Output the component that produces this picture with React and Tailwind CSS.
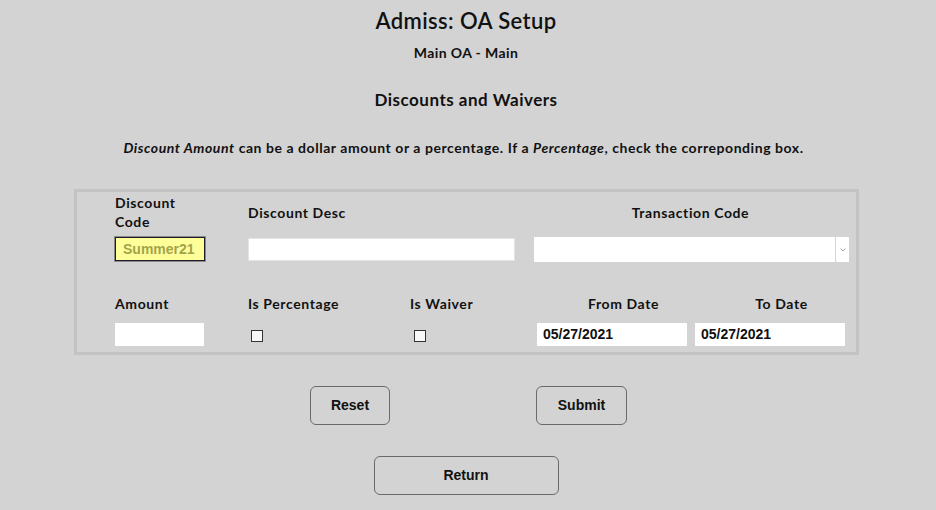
import React from "react";

const head = { fontFamily: "Lato, 'Open Sans', sans-serif" };
const arial = { fontFamily: "'Liberation Sans', Arial, sans-serif" };

function Check() {
  return <div className="w-[12px] h-[12px] border border-[#333] bg-[#f8f8f8]" />;
}

export default function App() {
  return (
    <div className="min-h-[510px] w-[936px] bg-[#d3d3d3] text-[#111]" style={head}>
      <div className="pr-[4px]">
        <div className="pt-[7px] text-center text-[22px] leading-[28px] font-semibold tracking-[0.4px]">Admiss: OA Setup</div>
        <div className="mt-[8px] text-center text-[14px] leading-[20px] font-bold tracking-[0.4px]">Main OA - Main</div>
        <div className="mt-[27px] text-center text-[17px] leading-[20px] font-bold tracking-[0.5px]">Discounts and Waivers</div>
      </div>
      <div className="mt-[28px] pr-[9px] text-center text-[14px] leading-[20px] font-bold tracking-[0.55px]">
        <i>Discount Amount</i> can be a dollar amount or a percentage. If a <i>Percentage</i>, check the correponding box.
      </div>

      <div className="mt-[31px] ml-[74px] w-[785px] h-[166px] border-[3px] border-[#c3c3c3] pl-[38px] text-[14px] font-bold tracking-[0.6px]">
        <div className="grid grid-cols-[133px_162px_124px_161px_160px] grid-rows-[38px_24px] gap-y-[7px] pt-[1px]">
          <div className="leading-[19px] self-center">Discount<br />Code</div>
          <div className="col-span-2 self-center leading-[19px]">Discount Desc</div>
          <div className="col-span-2 self-center leading-[19px] text-center pr-[8px]">Transaction Code</div>

          <div className="-mt-[1px] w-[90px] h-[24px] bg-[#ffff99] border border-[#1c1c2a] outline outline-1 outline-[#8a8a8a] flex items-center pl-[7px] text-[#a3a34a] tracking-normal" style={arial}>
            Summer21
          </div>
          <div className="col-span-2">
            <div className="w-[267px] h-[23px] bg-white border border-[#e4e4e4]" />
          </div>
          <div className="col-span-2">
            <div className="w-[315px] h-[25px] -mt-[1px] bg-white flex justify-end">
              <div className="w-[14px] h-full border-l border-[#d6d6d6] flex items-center justify-center">
                <svg width="6" height="4" viewBox="0 0 6 4"><path d="M0.5 0.5 L3 3 L5.5 0.5" fill="none" stroke="#a8a8a8" strokeWidth="1" /></svg>
              </div>
            </div>
          </div>
        </div>

        <div className="grid grid-cols-[133px_162px_124px_161px_160px] mt-[32px]">
          <div className="leading-[20px]">Amount</div>
          <div className="leading-[20px]">Is Percentage</div>
          <div className="leading-[20px]">Is Waiver</div>
          <div className="leading-[20px] text-center pl-[18px]">From Date</div>
          <div className="leading-[20px] text-center pl-[13px]">To Date</div>

          <div className="mt-[9px] w-[89px] h-[23px] bg-white" />
          <div className="mt-[16px] pl-[3px]"><Check /></div>
          <div className="mt-[16px] pl-[4px]"><Check /></div>
          <div className="mt-[9px] pl-[3px]">
            <div className="w-[150px] h-[23px] bg-white flex items-center pl-[6px] text-[14px] tracking-normal" style={arial}>05/27/2021</div>
          </div>
          <div className="mt-[9px]">
            <div className="w-[150px] h-[23px] bg-white flex items-center pl-[6px] text-[14px] tracking-normal" style={arial}>05/27/2021</div>
          </div>
        </div>
      </div>

      <div className="mt-[31px] flex justify-center gap-[146px] pl-[1px]" style={arial}>
        <button className="w-[80px] h-[39px] rounded-[6px] border border-[#6a6a6a] text-[14px] font-bold">Reset</button>
        <button className="w-[91px] h-[39px] rounded-[6px] border border-[#6a6a6a] text-[14px] font-bold">Submit</button>
      </div>
      <div className="mt-[31px] flex justify-center" style={arial}>
        <button className="ml-[-4px] w-[185px] h-[39px] rounded-[6px] border border-[#6a6a6a] text-[14px] font-bold">Return</button>
      </div>
    </div>
  );
}
